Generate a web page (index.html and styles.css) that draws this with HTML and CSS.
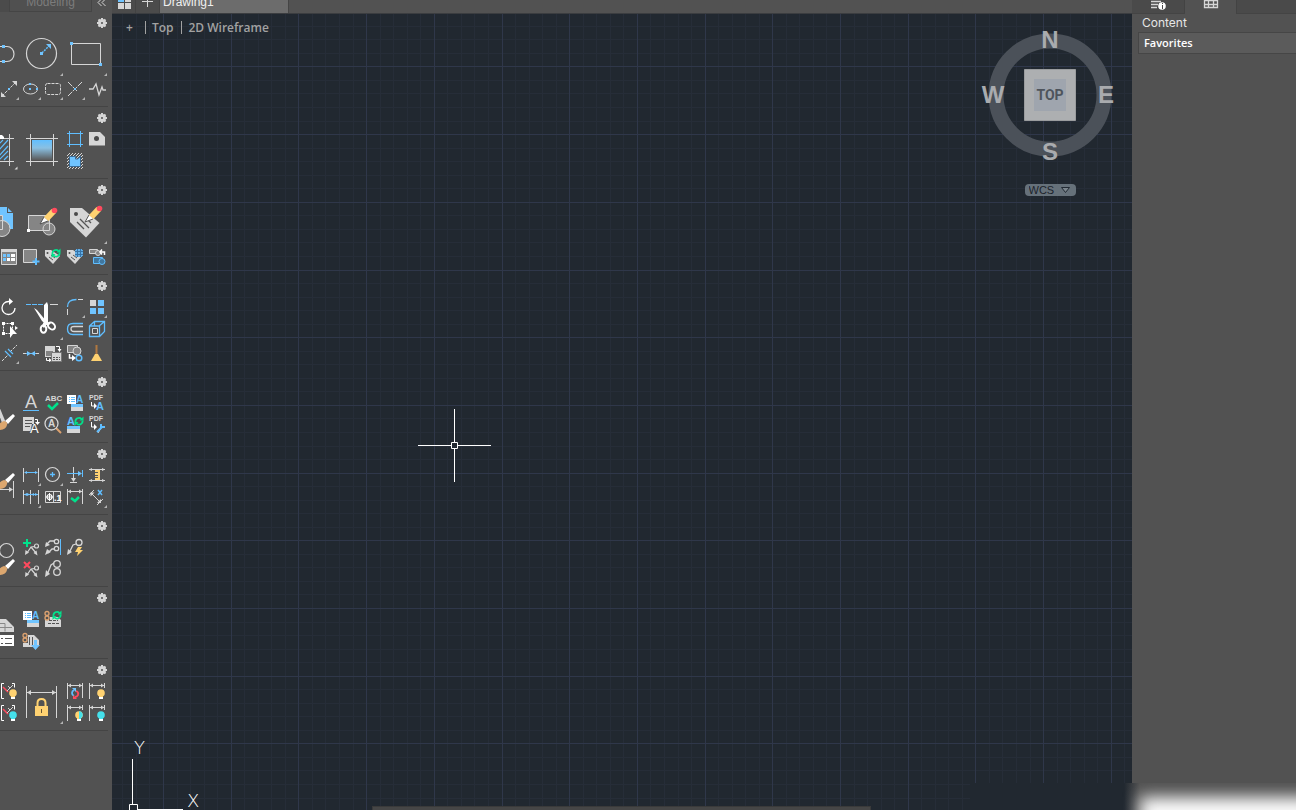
FILE: index.html
```html
<!DOCTYPE html>
<html lang="en">
<head>
  <meta charset="utf-8" />
  <meta name="viewport" content="width=device-width" />
  <title>Drawing1</title>
  <link rel="stylesheet" href="styles.css">
</head>

<body>
  <!-- shared icon parts -->
  <svg class="sprite" aria-hidden="true">
    <defs>
      <g id="gear">
        <circle class="g" cx="6" cy="6" r="2.500" stroke-width="3" />
        <path class="g" stroke-width="2" d="M6 1v2M6 9v2M1 6h2M9 6h2M2.500 2.500L4 4M8 8l1.500 1.500M2.500 9.500L4 8M8 4l1.500-1.500" />
      </g>
      <g id="pencil">
        <path class="wf" d="M0 0l4-7 4.500 4z" />
        <path class="g dark" d="M0 0l4-7M0 0l8-3" />
        <path class="yf" d="M4-7l7.500-8 4.500 4-7.500 8z" />
        <circle class="rf" cx="14.500" cy="-13.500" r="2.800" />
      </g>
      <g id="brush">
        <path class="wf" d="M13-13l2 2-7 8-3-3z" />
        <path class="tf" d="M4-6q4 1 3 4-1 5-8 5h-4q3-2 4-5 1-3 5-4z" />
      </g>
      <g id="bulb">
        <circle fill="currentColor" cx="0" cy="0" r="3.800" />
        <path fill="currentColor" d="M-2 2h4v2h-4z" />
        <path class="wf" d="M-2 4h4v2h-4z" />
      </g>
      <g id="tag">
        <path class="gf" d="M3 5h6l9 6-7 8-8-8z" />
        <circle class="df" cx="5.500" cy="8" r="1" />
        <path class="g dark" d="M7 12l4 3M9 10l4 3" />
      </g>
      <g id="sync">
        <path class="n" stroke-width="1.800" d="M-3.500 1a3.500 3.500 0 0 1 6-3M3.500-.5a3.500 3.500 0 0 1-6 3" />
        <path class="nf" d="M4.500-4.500v4h-4zM-4.500 5v-4h4z" />
      </g>
      <g id="leader">
        <path class="g" stroke-width="1.300" d="M5 17l4-8 3-1" />
        <path class="gf" d="M3 19l1-6 4 3z" />
        <circle class="g" stroke-width="1.300" cx="15" cy="6.500" r="3" />
      </g>
      <g id="leaders">
        <path class="g" stroke-width="1.200" d="M6 17l4-6 4-.5M10 11l5 6" />
        <path class="gf" d="M4 19l.5-5 3.500 2.500zM16.500 19.500l-1-5-3 2.500z" />
        <circle class="g" stroke-width="1.200" cx="15.500" cy="10" r="2" />
      </g>
      <g id="block8">
        <circle class="t" cx="5" cy="5.500" r="2" stroke-width="1.300" />
        <circle class="t" cx="5" cy="10" r="2" stroke-width="1.300" />
      </g>
      <g id="style">
        <path class="wf" d="M3 3h9v9H3z" />
        <path class="b" d="M5 5.500h1M7 5.500h4M5 7.500h1M7 7.500h4M5 9.500h1M7 9.500h4" />
        <text class="glyph blue" x="12" y="11" font-size="10">A</text>
        <path class="bf" d="M7 12h12v3H7z" />
        <path class="gf" d="M7 15h12v4H7z" />
      </g>
      <g id="dimframe">
        <path class="g" d="M3.500 3v16M18.500 3v5M4 5.500h15" />
        <path class="gf" d="M4 5.500l3-2v4zM18 5.500l-3-2v4z" />
      </g>
      <g id="redcheck">
        <path class="w" d="M6 3.500H3.500v15H6M14 3.500h2.500v4" />
        <path class="r" d="M5 7l5 5" stroke-width="1.500" />
        <path class="g" d="M9 11l6-6M12 8l-2-2" />
      </g>
    </defs>
  </svg>

  <div class="app">
    <aside class="palette" aria-label="Tool sets">
      <div class="palette-tabs">
        <button class="workspace" type="button">Modeling</button>
        <button class="collapse" type="button" aria-label="Collapse">
          <svg width="12" height="12"><path class="g" d="M5.500-1L2 2.500 5.500 6M9.500-1L6 2.500 9.500 6" /></svg>
        </button>
      </div>

      <!-- draw -->
      <section class="panel panel-first">
        <div class="panel-head"><button type="button" aria-label="Draw settings"><svg width="12" height="12"><use href="#gear" /></svg></button></div>
        <div class="tools">
          <button class="tool large" type="button" aria-label="Polyline"><svg width="44" height="44"><path class="g" stroke-width="1.200" d="M20 14.500H31a7 7.500 0 0 1 0 15H20" /><path class="bf" d="M26 13h3v3h-3zM26 28h3v3h-3z" /></svg></button>
          <button class="tool large flyout" type="button" aria-label="Circle"><svg width="44" height="44"><circle class="g" cx="21.500" cy="21.500" r="15" stroke-width="1.200" /><path class="b" stroke-width="1.500" stroke-dasharray="2 1" d="M22 21l7-7" /><path class="bf" d="M20 20h3v3h-3zM31 12v5l-5-5z" /></svg></button>
          <button class="tool large flyout" type="button" aria-label="Rectangle"><svg width="44" height="44"><path class="g" d="M7.500 11.500h29v21h-29z" /><path class="bf" d="M6 10h3v3H6zM35 31h3v3h-3z" /></svg></button>
          <button class="tool from-2 flyout" type="button" aria-label="Line"><svg width="22" height="22"><path class="g" stroke-dasharray="3 1" d="M4 18L18 4" /><path class="gf" d="M3 19v-5l5 5zM19 3v5l-5-5z" /><path class="bf" d="M10 10h2v2h-2z" /></svg></button>
          <button class="tool flyout" type="button" aria-label="Ellipse"><svg width="22" height="22"><ellipse class="g" cx="10.500" cy="11" rx="7" ry="5" /><path class="bf" d="M9 5h2v2H9zM9 10h2v2H9zM16 10h2v2h-2z" /></svg></button>
          <button class="tool flyout" type="button" aria-label="Revision cloud"><svg width="22" height="22"><rect class="g" x="3.500" y="5.500" width="15" height="11" rx="2" stroke-dasharray="3 1" /></svg></button>
          <button class="tool flyout" type="button" aria-label="Construction line"><svg width="22" height="22"><path class="g" stroke-dasharray="6 1" d="M4 4l14 14M18 4L4 18" /><path class="pf" d="M13 13h6v6h-6z" /><path class="bf" d="M10 10h2v2h-2z" /></svg></button>
          <button class="tool" type="button" aria-label="Freehand"><svg width="22" height="22"><path class="g" stroke-width="1.300" d="M3 11h4l3-5 3 11 3-8 1 3h3" /></svg></button>
        </div>
      </section>

      <!-- hatch -->
      <section class="panel">
        <div class="panel-head"><button type="button" aria-label="Hatch settings"><svg width="12" height="12"><use href="#gear" /></svg></button></div>
        <div class="tools">
          <button class="tool large hatch" type="button" aria-label="Hatch"><svg width="44" height="44"><path class="b" stroke-width="1.200" d="M22 17l5-5M22 23l10-11M22 29l10-11M23 32l9-9M28 32l4-4" /><path class="g" d="M20 10.500h18M20 33.500h18M33.500 6v32" /><path class="wf" d="M20 7h6l2 2v2h-8z" /><path class="gf" d="M41.500 38.500v3h-3z" /></svg></button>
          <button class="tool large" type="button" aria-label="Gradient"><svg width="44" height="44"><linearGradient id="fade" x2="0" y2="1"><stop offset="0" stop-color="#60beff" /><stop offset=".4" stop-color="#8ac0e2" /><stop offset="1" stop-color="#5a5a5a" /></linearGradient><path fill="url(#fade)" d="M12 12h20v20H12z" /><path class="g" d="M6 10.500h32M6 33.500h32M10.500 6v32M33.500 6v32" /></svg></button>
          <button class="tool" type="button" aria-label="Boundary"><svg width="22" height="22"><path class="b" d="M3 5.500h16M3 16.500h16M5.500 3v16M16.500 3v16" /></svg></button>
          <button class="tool" type="button" aria-label="Wipeout"><svg width="22" height="22"><path class="gf" d="M3 4h11l5 5v8.500H3z" /><circle class="df" cx="10.500" cy="10.500" r="2.500" /></svg></button>
          <button class="tool" type="button" aria-label="Region"><svg width="22" height="22"><path class="g" d="M3 6l3-3M3 9l6-6M3 12l9-9M3 15l12-12M3 18L18 3M5 19L19 5M8 19L19 8M11 19l8-8M14 19l5-5M17 19l2-2" /><path class="bf" stroke="#3a6a94" d="M5.500 6.500h6V9h2l3-2.500v10h-11z" /></svg></button>
        </div>
      </section>

      <!-- blocks -->
      <section class="panel">
        <div class="panel-head"><button type="button" aria-label="Block settings"><svg width="12" height="12"><use href="#gear" /></svg></button></div>
        <div class="tools">
          <button class="tool large" type="button" aria-label="Insert block"><svg width="44" height="44"><path class="bf" d="M18 7h13l6 6v16H18z" /><path class="pf" d="M31 7h1v5h5v1h-6z" /><path class="g grey" d="M18 15.500h8.500v14H18z" /><circle class="g grey" cx="26" cy="28.500" r="8" /><path class="g" d="M18 29.500h8.500v-9" /></svg></button>
          <button class="tool large" type="button" aria-label="Edit block"><svg width="44" height="44"><path class="g grey" d="M8.500 15.500h21v15h-21z" /><circle class="g grey" cx="29" cy="29" r="6" /><path class="g" d="M22 30.500h7.500V23" /><path class="wf" d="M7 29h3v3H7z" /><use href="#pencil" x="20" y="24" /></svg></button>
          <button class="tool large flyout" type="button" aria-label="Edit attributes"><svg width="44" height="44"><path class="gf" d="M6 8h12l17.500 15L22 37.500 6 22z" /><circle class="df" cx="12" cy="14" r="2" /><path class="g dark" stroke-width="1.300" d="M13 22l7 7M16 19l9 9M24 20l3 3" /><use href="#pencil" x="21" y="22" /></svg></button>
          <button class="tool from-2" type="button" aria-label="Table"><svg width="22" height="22"><path class="g grey" d="M3.500 3.500h15v15h-15z" /><path class="gf" d="M3 3h16v3H3z" /><path class="bf" d="M5 8h3v3H5zM5 12h3v3H5zM9 8h3v3H9z" /><path class="wf" d="M13 8h4v3h-4zM9 12h3v3H9zM13 12h4v3h-4z" /></svg></button>
          <button class="tool" type="button" aria-label="Create block"><svg width="22" height="22"><path class="g grey" d="M3.500 3.500h13v13h-13z" /><path class="b" stroke-width="2" d="M16 12v7M12.500 15.500h7" /></svg></button>
          <button class="tool" type="button" aria-label="Sync attributes"><svg width="22" height="22"><use href="#tag" y="-1" /><use href="#sync" x="14" y="7" /></svg></button>
          <button class="tool" type="button" aria-label="Define attributes"><svg width="22" height="22"><use href="#tag" y="-1" /><path fill="#62aee6" d="M12 3h6v1h1v6h-1v1h-6v-1h-1V4h1z" /><path stroke="#3673a8" d="M11 5.500h8M11 8.500h8M13.500 3v8M16.500 3v8" /></svg></button>
          <button class="tool" type="button" aria-label="Replace block"><svg width="22" height="22"><path class="g grey" d="M3.500 3.500h8v4h-8z" /><circle class="g grey" cx="12" cy="7" r="2.500" /><path class="w" stroke-width="1.500" d="M18.500 9V6H15M16 3.500L14 6l2 2.500" /><path class="b bluegrey" d="M7.500 11.500h9v6h-9z" /><circle class="b bluegrey" cx="16" cy="15.500" r="3" /></svg></button>
        </div>
      </section>

      <!-- modify -->
      <section class="panel">
        <div class="panel-head"><button type="button" aria-label="Modify settings"><svg width="12" height="12"><use href="#gear" /></svg></button></div>
        <div class="tools">
          <button class="tool from-2" type="button" aria-label="Rotate"><svg width="22" height="22"><path class="w" stroke-width="1.300" d="M12 5.500H10.500a6.500 6.500 0 1 0 6.500 6.500" /><path class="wf" d="M11 2l4 3.500L11 9z" /></svg></button>
          <button class="tool large flyout" type="button" aria-label="Trim"><svg width="44" height="44"><path class="b" stroke-dasharray="5 1" d="M6 8.500h17" /><path class="g" d="M30 8.500h8" /><path class="wf" d="M24 9l3-3 1 3v18l-4 5-2-2 2-5zM14 12l3 2 10 12 4 1-3 3-6-5z" /><ellipse class="w" stroke-width="2" cx="23.500" cy="33" rx="2.800" ry="3.800" /><ellipse class="w" stroke-width="2" cx="31.500" cy="30" rx="3" ry="4" transform="rotate(-45 31.500 30)" /></svg></button>
          <button class="tool flyout" type="button" aria-label="Fillet"><svg width="22" height="22"><path class="b" stroke-width="1.300" d="M3.500 11q0-7.500 9-7.500" /><path class="g" d="M14 3.500h5M3.500 13v6" /></svg></button>
          <button class="tool flyout" type="button" aria-label="Array"><svg width="22" height="22"><path class="gf" d="M4 4h6v6H4z" /><path class="bf" d="M12 4h6v6h-6zM4 12h6v6H4zM12 12h6v6h-6z" /></svg></button>
          <button class="tool from-2" type="button" aria-label="Stretch"><svg width="22" height="22"><path class="w" stroke-dasharray="2 1" d="M5.500 5.500h9v10h-9z" /><path class="wf" d="M4 4h3v3H4zM13 4h3v3h-3zM4 14h3v3H4zM17 8l3 2-3 2zM12 8l7 8h-4l-3 4z" /></svg></button>
          <button class="tool from-5" type="button" aria-label="Offset"><svg width="22" height="22"><path class="b" stroke-width="1.300" d="M19 5.500H9q-5.500 0-5.500 5.500T9 16.500h10" /><path class="g" stroke-width="1.300" d="M19 8.500h-9q-3 0-3 2.500t3 2.500h9" /></svg></button>
          <button class="tool" type="button" aria-label="Box"><svg width="22" height="22"><path class="b" stroke-width="1.300" d="M3.500 8l5-4.500h10v10l-5 5h-10zM3.500 8H13l5.500-4.500M13.500 8v10M8.500 4v4" /><path class="g" d="M6.500 10.500h5v5h-5z" /></svg></button>
          <button class="tool from-2 flyout" type="button" aria-label="Break"><svg width="22" height="22"><path class="g" stroke-dasharray="3 1" d="M4 19l6-6M12 10l7-7" /><path class="b" stroke-width="1.200" d="M7 9l6 6M10 7l5 5" /></svg></button>
          <button class="tool" type="button" aria-label="Join"><svg width="22" height="22"><path class="g" d="M3 11.500h4M15 11.500h4" /><path class="b" d="M6 11.500h10" /><path class="bf" d="M7 9l4 2.500L7 14zM15 9l-4 2.500 4 2.500z" /></svg></button>
          <button class="tool" type="button" aria-label="Copy to table"><svg width="22" height="22"><path class="gf" d="M3 4h10v11H3z" /><path fill="#838383" d="M4 9h7v5H4z" /><path class="w" d="M14 4.500h3.500V9M4.500 16v2.500H8" /><path class="wf" d="M15.500 7h4l-2 3zM7 16l3 2.500L7 20z" /><path class="gf" stroke="#777" d="M9.500 10.500h10v9h-10z" /><path class="g dark" stroke-dasharray="2 1" d="M11 15.500h7M11 17.500h7" /></svg></button>
          <button class="tool" type="button" aria-label="Convert"><svg width="22" height="22"><path class="g grey" d="M3.500 3.500h10v7h-10z" /><circle class="g grey" cx="13" cy="9" r="4" /><path class="w" stroke-width="1.500" d="M5.500 12v4H9" /><path class="wf" d="M8 13l4 3-4 3z" /><circle class="b" cx="15" cy="16" r="2.800" stroke-width="1.500" /></svg></button>
          <button class="tool" type="button" aria-label="Purge"><svg width="22" height="22"><path stroke="#b07840" stroke-width="2" d="M10.500 3v10" /><path class="yf" d="M9 12h3l4 7H5z" /></svg></button>
        </div>
      </section>

      <!-- text -->
      <section class="panel">
        <div class="panel-head"><button type="button" aria-label="Text settings"><svg width="12" height="12"><use href="#gear" /></svg></button></div>
        <div class="tools">
          <button class="tool large" type="button" aria-label="Text style"><svg width="44" height="44"><path class="gf" d="M20 14h3l7 17h-4z" /><use href="#brush" x="24" y="35" /></svg></button>
          <button class="tool" type="button" aria-label="Multiline text"><svg width="22" height="22"><text class="glyph light" x="5" y="16" font-size="18">A</text><path class="b" d="M3 18.500h16" /></svg></button>
          <button class="tool" type="button" aria-label="Spelling"><svg width="22" height="22"><text class="glyph" x="3" y="9" font-size="8">ABC</text><path class="n" stroke-width="2.500" d="M6 13l4 4 6-6" /></svg></button>
          <button class="tool" type="button" aria-label="Text styles"><svg width="22" height="22"><use href="#style" /></svg></button>
          <button class="tool" type="button" aria-label="Import PDF text"><svg width="22" height="22"><text class="glyph" x="3" y="8" font-size="7">PDF</text><path class="w" d="M5.500 10v4H9" /><path class="wf" d="M8 11l3 3-3 3z" /><text class="glyph blue" x="10" y="18" font-size="11">A</text></svg></button>
          <button class="tool" type="button" aria-label="Convert to multiline"><svg width="22" height="22"><path class="gf" d="M3 3h11v14H3z" /><path class="g dark" d="M5 6.500h7M5 9.500h7M5 12.500h5" /><path class="w" d="M15 5.500h2.500V9" /><path class="wf" d="M15 8h5l-2.500 3z" /><path class="pf" d="M12 10h4l3 9h-9z" /><text class="glyph light white" x="10" y="19" font-size="13">A</text></svg></button>
          <button class="tool" type="button" aria-label="Find text"><svg width="22" height="22"><path class="t" stroke-width="2" d="M14 14l5 5" /><circle class="g" cx="9.500" cy="9.500" r="6.500" stroke-width="1.300" /><text class="glyph" x="6" y="13" font-size="10">A</text></svg></button>
          <button class="tool" type="button" aria-label="Update text"><svg width="22" height="22"><text class="glyph blue" x="3" y="11" font-size="11">A</text><use href="#sync" x="15" y="7" /><path class="bf" d="M3 12h13v3H3z" /><path class="gf" d="M3 15h13v4H3z" /></svg></button>
          <button class="tool" type="button" aria-label="PDF settings"><svg width="22" height="22"><text class="glyph" x="3" y="7" font-size="7">PDF</text><path class="w" d="M5.500 8v5H9" /><path class="wf" d="M8 10l3 3-3 3z" /><path class="g" d="M12 19l3-5" /><path class="b" stroke-width="2" d="M11 18l5-5M15 10v3h4" /></svg></button>
        </div>
      </section>

      <!-- dimensions -->
      <section class="panel">
        <div class="panel-head"><button type="button" aria-label="Dimension settings"><svg width="12" height="12"><use href="#gear" /></svg></button></div>
        <div class="tools">
          <button class="tool large" type="button" aria-label="Dimension style"><svg width="44" height="44"><use href="#brush" x="24" y="22" /><path class="g" d="M37.500 17v17M20 25.500h16" /><path class="gf" d="M37 25.500l-4-2.500v5z" /></svg></button>
          <button class="tool flyout" type="button" aria-label="Linear"><svg width="22" height="22"><path class="g" d="M3.500 4v14M18.500 4v14" /><path class="b" d="M5 8.500h12" /><path class="bf" d="M4 8.500L7 7v3zM18 8.500L15 7v3z" /></svg></button>
          <button class="tool flyout" type="button" aria-label="Center mark"><svg width="22" height="22"><circle class="g" cx="10.500" cy="10.500" r="7" stroke-width="1.200" /><path class="b" stroke-width="1.300" d="M10.500 8v5M8 10.500h5" /></svg></button>
          <button class="tool" type="button" aria-label="Ordinate"><svg width="22" height="22"><path class="g" d="M9.500 3v14M6 18.500h7" /><path class="gf" d="M9.500 18L7 14h5z" /><path class="b" d="M3 9.500h13M18.500 6v7" /><path class="bf" d="M18 9.500L14 7v5z" /></svg></button>
          <button class="tool" type="button" aria-label="Dimension space"><svg width="22" height="22"><path class="g" d="M3 5.500h16M3 16.500h16" /><path class="gf" d="M3 5.500l3-1.500v3zM19 5.500l-3-1.500v3zM3 16.500l3-1.500v3zM19 16.500l-3-1.500v3z" /><path class="yf" d="M9 6h5v10H9z" /><path class="g dark" d="M9 8.500h3M9 11.500h3M9 13.500h3" /></svg></button>
          <button class="tool flyout" type="button" aria-label="Continue"><svg width="22" height="22"><path class="g" d="M3.500 4v14M10.500 4v14M18.500 4v14" /><path class="b" d="M4 8.500h14" /><path class="bf" d="M10 8.500L7 7v3zM4 8.500L7 7v3zM11 8.500l3-1.500v3zM18 8.500L15 7v3z" /></svg></button>
          <button class="tool" type="button" aria-label="Tolerance"><svg width="22" height="22"><path class="g" d="M3.500 5.500h15v11h-15zM11.500 5v12" /><circle class="w" cx="7.500" cy="11" r="2.500" stroke-width="1.200" /><path class="w" d="M7.500 7v8M4 11h7" /><text class="glyph white" x="12" y="15" font-size="9">.1</text></svg></button>
          <button class="tool" type="button" aria-label="Inspect"><svg width="22" height="22"><use href="#dimframe" /><path class="g" d="M18.500 3v15" /><path class="n" stroke-width="2.500" d="M7 12l4 3 4-4" /></svg></button>
          <button class="tool flyout" type="button" aria-label="Oblique"><svg width="22" height="22"><path class="g" d="M5 7l9 9M3 9l5-5M11 19l6-6" /><path class="gf" d="M4.500 6.500h4l-4 4zM15 17v-4l-4 4z" /><path class="b" stroke-width="1.500" d="M12 4l4 5M16 4l-4 5" /></svg></button>
        </div>
      </section>

      <!-- leaders -->
      <section class="panel">
        <div class="panel-head"><button type="button" aria-label="Leader settings"><svg width="12" height="12"><use href="#gear" /></svg></button></div>
        <div class="tools">
          <button class="tool large" type="button" aria-label="Leader style"><svg width="44" height="44"><circle class="g" cx="30.500" cy="14.500" r="7" stroke-width="1.200" /><use href="#brush" x="24" y="36" /></svg></button>
          <button class="tool" type="button" aria-label="Add leader"><svg width="22" height="22"><use href="#leaders" x="1" /><path class="n" stroke-width="2" d="M7 3v8M3 7h8" /></svg></button>
          <button class="tool" type="button" aria-label="Align leaders"><svg width="22" height="22"><path class="g" stroke-width="1.300" d="M4 9l4-4h4M6 17l4-4h2" /><circle class="g" cx="14.500" cy="5.500" r="2.200" stroke-width="1.300" /><circle class="g" cx="14.500" cy="12.500" r="2.200" stroke-width="1.300" /><path class="gf" d="M3 11l1-5 4 3zM3 19l2-6 4 3z" /><path class="b" d="M18.500 3v16" /></svg></button>
          <button class="tool" type="button" aria-label="Quick leader"><svg width="22" height="22"><use href="#leader" /><path class="yf" d="M14 11h4l-2 3h3l-6 6 1-4h-3z" /></svg></button>
          <button class="tool from-3" type="button" aria-label="Remove leader"><svg width="22" height="22"><use href="#leaders" x="1" /><path class="r" stroke-width="2" d="M4 4l6 6M10 4l-6 6" /></svg></button>
          <button class="tool" type="button" aria-label="Collect leaders"><svg width="22" height="22"><path class="g" stroke-width="1.300" d="M5 17l4-10 3-2" /><path class="gf" d="M3 19l1-7 4 4z" /><circle class="g" cx="15" cy="6" r="3.300" stroke-width="1.300" /><circle class="g" cx="15" cy="14" r="3.300" stroke-width="1.300" /></svg></button>
        </div>
      </section>

      <!-- tables -->
      <section class="panel">
        <div class="panel-head"><button type="button" aria-label="Table settings"><svg width="12" height="12"><use href="#gear" /></svg></button></div>
        <div class="tools">
          <button class="tool large" type="button" aria-label="Table style"><svg width="44" height="44"><path class="gf" d="M18 11h12l8 8v5H18z" /><path fill="none" stroke="#888888" d="M20 15.500h9v8M20 19.500h16" /><path class="wf" d="M18 27h20v11H18z" /><path class="g dark" stroke-width="1.200" d="M25 30.500h2M29 30.500h7M25 35.500h2M29 35.500h7" /></svg></button>
          <button class="tool" type="button" aria-label="Data style"><svg width="22" height="22"><use href="#style" /></svg></button>
          <button class="tool" type="button" aria-label="Update links"><svg width="22" height="22"><path class="gf" d="M3 12h5V9h8l3 3v7H3z" /><use href="#block8" /><path class="g dark" stroke-dasharray="3 1" d="M7 12.500h9M6 15.500h11" /><use href="#sync" x="15" y="7" /></svg></button>
          <button class="tool from-3" type="button" aria-label="Extract data"><svg width="22" height="22"><path class="gf" d="M8 5h6l5 5v5H8z" /><path class="gf" d="M3 13h11v4H3z" /><path class="g dark" d="M9.500 7v8M12.500 7v8" /><use href="#block8" /><path class="bf" d="M14 10h3v5h3l-4.500 5-4.500-5h3z" /></svg></button>
        </div>
      </section>

      <!-- constraints -->
      <section class="panel">
        <div class="panel-head"><button type="button" aria-label="Constraint settings"><svg width="12" height="12"><use href="#gear" /></svg></button></div>
        <div class="tools">
          <button class="tool from-2" type="button" aria-label="Show geometric"><svg width="22" height="22"><use href="#redcheck" /><use class="on" href="#bulb" x="15" y="13" /></svg></button>
          <button class="tool large flyout" type="button" aria-label="Lock dimension"><svg width="44" height="44"><path class="g" d="M6.500 6v32M36.500 6v32M7 12.500h29" /><path class="gf" d="M7 12.500l4-2.500v5zM36 12.500L32 10v5z" /><path stroke="#ffd271" stroke-width="2" fill="none" d="M17.500 27v-4q0-4 4-4t4 4v4" /><path class="yf" d="M15 26h13v10H15z" /><path stroke="#6b5732" d="M21.500 29v4" /></svg></button>
          <button class="tool" type="button" aria-label="Convert constraint"><svg width="22" height="22"><use href="#dimframe" /><path class="g" d="M18.500 3v15" /><path class="b" stroke-width="1.800" d="M10 16q-2-1-2-3 0-2 2-3" /><path class="r" stroke-width="1.800" d="M12 11q3 1 2 4-1 2-3 2" /><path class="bf" d="M8 8h4v4z" /><path class="rf" d="M13 19H9v-4z" /></svg></button>
          <button class="tool" type="button" aria-label="Show dynamic"><svg width="22" height="22"><use href="#dimframe" /><use class="on" href="#bulb" x="15" y="13" /></svg></button>
          <button class="tool from-2" type="button" aria-label="Hide geometric"><svg width="22" height="22"><use href="#redcheck" /><use class="off" href="#bulb" x="15" y="13" /></svg></button>
          <button class="tool from-5" type="button" aria-label="Show or hide"><svg width="22" height="22"><use href="#dimframe" /><use class="on" href="#bulb" x="15" y="13" /><path fill="#45e0ea" d="M15 9a3.800 3.800 0 0 1 2 7v1h-2z" /></svg></button>
          <button class="tool" type="button" aria-label="Hide dynamic"><svg width="22" height="22"><use href="#dimframe" /><use class="off" href="#bulb" x="15" y="13" /></svg></button>
        </div>
      </section>
    </aside>

    <main class="workarea">
      <div class="filetabs">
        <button class="filetab-icon" type="button" aria-label="Start"><svg width="24" height="13"><path class="bf" d="M6 0h6v2H6z" /><path class="gf" d="M13 0h6v2h-6zM6 3h6v6H6zM13 3h6v6h-6z" /></svg></button>
        <button class="filetab-icon" type="button" aria-label="New tab"><svg width="23" height="13"><path class="g" d="M6 1.500h11M11.500 0v7" /></svg></button>
        <button class="filetab" type="button">Drawing1</button>
      </div>

      <div class="drawing" id="drawing">
        <svg class="grid" aria-hidden="true">
          <path class="grid-minor" id="grid-minor" />
          <path class="grid-major" id="grid-major" />
        </svg>

        <div class="viewbar">
          <button type="button">+</button>
          <button type="button">Top</button>
          <button type="button">2D Wireframe</button>
        </div>

        <svg class="crosshair" width="74" height="74" aria-hidden="true">
          <path d="M0 36.500h33M40 36.500h33M36.500 0v33M36.500 40v33M33.500 33.500h6v6h-6z" />
        </svg>

        <div class="navigator">
          <svg class="compass" width="134" height="136">
            <circle class="ring" cx="67" cy="68" r="54" />
            <path class="cube" d="M41.500 42.500h51v51h-51z" />
            <path class="cube-face" d="M51 52h32v32H51z" />
            <text class="cube-label" x="67" y="73">TOP</text>
            <text x="67" y="21">N</text>
            <text x="67" y="133">S</text>
            <text x="10" y="76">W</text>
            <text x="123" y="76">E</text>
          </svg>
          <div class="wcs">
            <select aria-label="Coordinate system"><option>WCS</option></select>
            <svg width="11" height="8" aria-hidden="true"><path d="M1.500 1.500h8l-4 5z" /></svg>
          </div>
        </div>

        <svg class="ucs" width="80" height="72">
          <path d="M4.500 21v46M9 71.500h46M1.500 66.500h8v8h-8z" />
          <text x="6" y="16">Y</text>
          <text x="59" y="69">X</text>
        </svg>

        <div class="commandline"></div>
      </div>
    </main>

    <aside class="side">
      <div class="side-tabs">
        <button class="side-tab" type="button" aria-label="Properties"><svg width="20" height="13"><path class="g" stroke-width="1.500" d="M3 1.500h10M3 4.500h7M3 7.500h6" /><circle class="wf" cx="14" cy="6" r="3.800" /><path stroke="#494949" d="M14.500 3v1M14.500 5v4" /></svg></button>
        <button class="side-tab active" type="button" aria-label="Content"><svg width="16" height="13"><path class="g" stroke-width="1.300" d="M1.500 0v7.500h13V0M5.500 0v7M10.500 0v7M1 .5h14M1 4.500h14" /></svg></button>
      </div>
      <div class="side-title">Content</div>
      <button class="side-row" type="button">Favorites</button>
    </aside>

    <div class="glow"><div class="glow-light"></div></div>
  </div>

  <script src="grid.js"></script>
</body>
</html>
```
FILE: styles.css
```css
* {
  box-sizing: border-box;
}

body {
  margin: 0;
  background-color: #525252;
  color: #e6e6e6;
  font-family: "Liberation Sans", Arial, sans-serif;
  font-size: 12px;
}

button {
  padding: 0;
  border: none;
  background: none;
  color: inherit;
  font: inherit;
  cursor: pointer;
}

svg {
  display: block;
}

.sprite {
  display: none;
}

.app {
  position: relative;
  display: flex;
  height: 100vh;
  overflow: hidden;
}

/* icon colours */
.w, .g, .b, .n, .r, .t {
  fill: none;
}

.w { stroke: #ffffff; }
.g { stroke: #d6d6d6; }
.b { stroke: #60beff; }
.n { stroke: #00e28c; }
.r { stroke: #ff4a5e; }
.t { stroke: #dca270; }
.wf { fill: #ffffff; }
.gf { fill: #d6d6d6; }
.bf { fill: #70c4ff; }
.nf { fill: #00e28c; }
.rf { fill: #ff4a5e; }
.tf { fill: #dca76f; }
.yf { fill: #ffd271; }
.df { fill: #4a4a4a; }
.pf { fill: #525252; }
.g.dark { stroke: #555555; }
.g.grey { fill: #858585; }
.bluegrey { fill: #41779f; }
.on { color: #ffd271; }
.off { color: #45e0ea; }

.glyph {
  fill: #d6d6d6;
  font-family: "Liberation Sans", Arial, sans-serif;
  font-weight: bold;
}

.glyph.light { font-weight: normal; }
.glyph.blue { fill: #60beff; }
.glyph.white { fill: #ffffff; }

/* left palette */
.palette {
  flex: 0 0 112px;
  overflow: hidden;
  background-color: #525252;
}

.palette-tabs {
  display: flex;
  height: 12px;
  padding-left: 9px;
  background-color: #4b4b4b;
  overflow: hidden;
}

.workspace {
  width: 83px;
  height: 12px;
  padding-bottom: 8px;
  border: 1px solid #454545;
  border-top: none;
  background-color: #505050;
  color: #7c7c7c;
  font-size: 12px;
  line-height: 2px;
}

.collapse {
  flex: 1;
  padding-left: 4px;
  background-color: #525252;
}

.panel {
  margin-right: 4px;
  padding-bottom: 6px;
  border-bottom: 1px solid #444444;
}

.panel-head {
  display: flex;
  justify-content: flex-end;
  align-items: center;
  height: 21px;
  padding-top: 1px;
}

.panel-first .panel-head {
  height: 20px;
}

.tools {
  display: grid;
  grid-template-columns: repeat(6, 22px);
  grid-template-rows: 22px 22px;
  grid-auto-rows: 24px;
  align-items: end;
  margin-left: -24px;
}

.tool {
  position: relative;
  width: 22px;
  height: 22px;
}

.tool.large {
  grid-column: span 2;
  grid-row: span 2;
  width: 44px;
  height: 44px;
}

.from-2 { grid-column-start: 2; }
.from-3 { grid-column-start: 3; }
.from-5 { grid-column-start: 5; }

.flyout::after {
  content: "";
  position: absolute;
  right: 1px;
  bottom: 0;
  border-bottom: 3px solid #b4b4b4;
  border-left: 3px solid transparent;
}

/* drawing area */
.workarea {
  flex: 1;
  display: flex;
  flex-direction: column;
  min-width: 0;
}

.filetabs {
  display: flex;
  flex: 0 0 14px;
  overflow: hidden;
  border-bottom: 1px solid #3b3d40;
  background-color: #525252;
}

.filetab-icon {
  width: 24px;
  overflow: hidden;
  background-color: #4b4b4b;
  border-right: 1px solid #434343;
}

.filetab {
  width: 129px;
  padding: 0 0 8px 3px;
  border-right: 1px solid #454545;
  background-color: #6c6c6c;
  color: #f0f0f0;
  font-size: 12px;
  line-height: 5px;
  text-align: left;
}

.drawing {
  position: relative;
  flex: 1;
  overflow: hidden;
  background-color: #212830;
}

.grid {
  position: absolute;
  width: 100%;
  height: 100%;
}

.grid-minor { fill: #262d38; }
.grid-major { fill: #2f374a; }

.viewbar {
  position: relative;
  display: flex;
  padding: 7px 0 0 14px;
  color: #a2a2a2;
  font-family: "Open Sans", "Noto Sans", sans-serif;
  font-size: 12px;
  font-weight: 600;
}

.viewbar button {
  height: 13px;
  padding-right: 8px;
  line-height: 13px;
}

.viewbar button:first-child {
  padding-right: 12px;
}

.viewbar button + button {
  padding-left: 6px;
  border-left: 1px solid #a2a2a2;
}

.crosshair {
  position: absolute;
  left: 306px;
  top: 395px;
  fill: none;
  stroke: #ffffff;
}

.navigator {
  position: absolute;
  top: 13px;
  right: 15px;
}

.compass {
  overflow: visible;
}

.compass text {
  fill: #a9abae;
  font-family: "Liberation Sans", Arial, sans-serif;
  font-size: 24px;
  font-weight: bold;
  text-anchor: middle;
}

.ring {
  fill: none;
  stroke: #4b5159;
  stroke-width: 15px;
}

.cube {
  fill: #adafb1;
  stroke: #9a9c9e;
}

.cube-face {
  fill: #9fa5ae;
}

.compass .cube-label {
  fill: #4e545c;
  font-family: "Liberation Sans Narrow", Roboto, sans-serif;
  font-size: 14px;
}

.wcs {
  position: relative;
  width: 51px;
  height: 12px;
  margin: 21px auto 0;
}

.wcs select {
  display: block;
  width: 100%;
  height: 12px;
  padding: 0 4px;
  border: none;
  border-radius: 4px;
  background-color: #66717a;
  color: #1c232b;
  font: 11px/12px "Liberation Sans", Arial, sans-serif;
  appearance: none;
}

.wcs svg {
  position: absolute;
  top: 2px;
  right: 5px;
  fill: #7b858d;
  stroke: #222a33;
  pointer-events: none;
}

.ucs {
  position: absolute;
  left: 16px;
  bottom: 0;
  overflow: visible;
  fill: none;
  stroke: #ffffff;
}

.ucs text {
  fill: #ffffff;
  stroke: none;
  font-family: "DejaVu Sans", "Liberation Sans", sans-serif;
  font-size: 18px;
  font-weight: 200;
}

.commandline {
  position: absolute;
  left: 260px;
  right: 261px;
  bottom: 0;
  height: 4px;
  border: 1px solid #3a3a3a;
  border-bottom: none;
  background-color: #464646;
}

/* right panel */
.side {
  flex: 0 0 164px;
  background-color: #525252;
}

.side-tabs {
  display: flex;
  height: 14px;
  background-color: #4a4a4a;
  border-bottom: 1px solid #444444;
}

.side-tab {
  display: flex;
  justify-content: center;
  width: 53px;
  height: 13px;
  border-right: 1px solid #434343;
  overflow: hidden;
}

.side-tab.active {
  width: 52px;
  height: 14px;
  background-color: #525252;
}

.side-title {
  padding-left: 10px;
  font-family: Inter, "Liberation Sans", sans-serif;
  font-size: 12px;
  line-height: 18px;
}

.side-row {
  display: block;
  width: calc(100% - 6px);
  height: 22px;
  margin-left: 6px;
  padding: 0 0 2px 5px;
  border: 1px solid #464646;
  border-right: none;
  background-color: #5b5b5b;
  color: #ffffff;
  font-family: "Open Sans", "Noto Sans", sans-serif;
  font-size: 11px;
  font-weight: 600;
  text-align: left;
}

/* soft light in the bottom corner, over the drawing and the panel */
.glow {
  position: absolute;
  right: 0;
  bottom: 0;
  width: 326px;
  height: 27px;
  overflow: hidden;
  background: linear-gradient(to right, #212830 154px, #525252 170px);
}

.glow-light {
  position: absolute;
  left: 170px;
  right: -40px;
  top: 14px;
  height: 60px;
  background-color: #fafafa;
  filter: blur(8px);
}
```
FILE: grid.js
```js
// grid lines: one major line for every five minor ones
const STEP = 67.7;
const START = { x: 51, y: 52.4 };

function drawGrid() {
  const area = document.getElementById('drawing');
  const w = area.clientWidth;
  const h = area.clientHeight;
  let minor = '';
  let major = '';

  for (let i = -5; START.x + i * STEP / 5 < w; i++) {
    const x = Math.round(START.x + i * STEP / 5);
    const line = `M${x} 0h1v${h}h-1z`;
    if (i % 5 === 0) major += line; else minor += line;
  }
  for (let i = -5; START.y + i * STEP / 5 < h; i++) {
    const y = Math.round(START.y + i * STEP / 5);
    const line = `M0 ${y}h${w}v1h-${w}z`;
    if (i % 5 === 0) major += line; else minor += line;
  }

  document.getElementById('grid-minor').setAttribute('d', minor);
  document.getElementById('grid-major').setAttribute('d', major);
}

drawGrid();
window.addEventListener('resize', drawGrid);
```
